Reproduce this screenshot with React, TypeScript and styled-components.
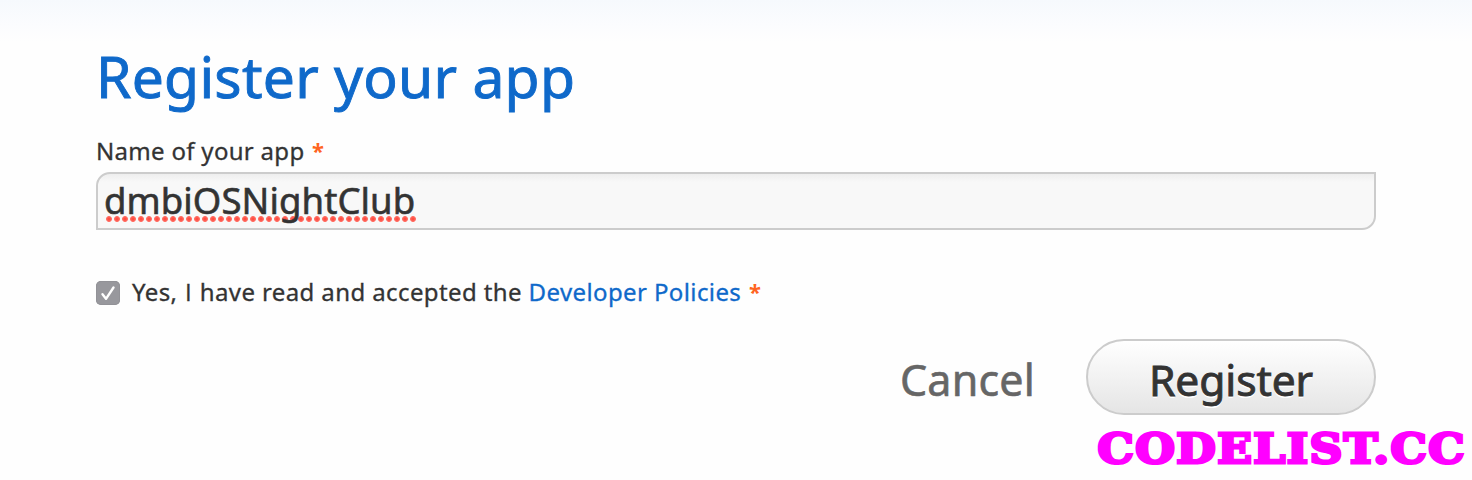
import React from "react";
import styled, { createGlobalStyle } from "styled-components";

const GlobalStyle = createGlobalStyle`
  *, *::before, *::after { box-sizing: border-box; }
  body {
    margin: 0;
    background: #fefefe;
    font-family: "Noto Sans", "Open Sans", sans-serif;
    color: #333;
  }
`;

const Page = styled.main`
  position: relative;
  height: 480px;
  padding: 41px 96px 0;
  overflow: hidden;
  background: linear-gradient(#f6f9fd 0, #fbfcfe 25px, #fefefe 42px);
`;

const Line = styled.span<{ $spacing: number; $stroke?: number }>`
  letter-spacing: ${(p) => p.$spacing}px;
  -webkit-text-stroke: ${(p) => p.$stroke ?? 0}px currentColor;
  white-space: pre;
`;

const Title = styled.h1`
  margin: 0 0 24px;
  font-size: 57px;
  font-weight: 400;
  line-height: 70px;
  color: #0f69ca;
`;

const Label = styled.label`
  display: block;
  margin-bottom: 5px;
  font-size: 24px;
  line-height: 32px;
`;

const Required = styled.span`
  margin-left: 1px;
  font-size: 22px;
  line-height: 1;
  vertical-align: 1px;
  color: #ff6420;
  font-weight: 700;
  -webkit-text-stroke: 0;
`;

const Field = styled.div`
  display: flex;
  align-items: flex-start;
  height: 58px;
  padding: 0 6px;
  border: 2px solid #ccc;
  border-radius: 14px 0 14px 0;
  background: linear-gradient(#eeeeee, #f8f8f8 8px);
`;

const Misspelled = styled.span`
  height: 48px;
  padding-right: 1px;
  font-size: 36.5px;
  line-height: 52px;
  background: radial-gradient(circle at 3px 3px, #ff4d42 1px, #ff766c 2.6px, transparent 3.3px) 2px 42px / 8px 6px repeat-x;
`;

const CheckRow = styled.div`
  display: flex;
  align-items: center;
  height: 34px;
  margin-top: 45px;
  font-size: 24px;
  line-height: 34px;
`;

const CheckBox = styled.span`
  display: flex;
  width: 24px;
  height: 24px;
  margin: 2px 12px 0 0;
  border-radius: 5px;
  background: #98989d;
  box-shadow: inset 0 0 0 1px #929297;
`;

const PlainI = styled.span`
  margin: 0 1px;
  font-family: "Open Sans", sans-serif;
`;

const Link = styled.a`
  color: #0f69ca;
`;

const Actions = styled.div`
  display: flex;
  justify-content: flex-end;
  align-items: center;
  gap: 51px;
  height: 76px;
  margin-top: 30px;
`;

const Cancel = styled.a`
  padding-top: 5px;
  font-size: 43px;
  line-height: 76px;
  color: #666;
`;

const RegisterButton = styled.button`
  width: 290px;
  height: 76px;
  padding: 4px 0 0;
  border: 2px solid #ccc;
  border-radius: 38px;
  background: linear-gradient(#fff, #e5e5e5);
  font: 400 42.5px/67px "Noto Sans", sans-serif;
  color: #333;
  text-shadow: 0 2px 0 #fff;
`;

const Watermark = styled.div`
  position: absolute;
  right: 6px;
  bottom: 1px;
  font: 700 41px/60px "DejaVu Serif", serif;
  color: #f0f;
  transform: scaleX(1.11);
  transform-origin: right center;
`;

export default function App() {
  return (
    <>
      <GlobalStyle />
      <Page>
        <Title><Line $spacing={0.25} $stroke={0.9}>Register your app</Line></Title>
        <Label>
          <Line $spacing={0.3} $stroke={0.3}>Name of your app <Required>*</Required></Line>
        </Label>
        <Field>
          <Misspelled><Line $spacing={0.1} $stroke={0.6}>dmbiOSNightClub</Line></Misspelled>
        </Field>
        <CheckRow>
          <CheckBox>
            <svg width="24" height="24" viewBox="0 0 24 24" fill="none" stroke="#fff" strokeWidth="2.4" strokeLinecap="round" strokeLinejoin="round">
              <path d="M6.5 13.2 10 17.8 17.5 6.5" />
            </svg>
          </CheckBox>
          <Line $spacing={0.39} $stroke={0.3}>Yes, <PlainI>I</PlainI> have read and accepted the <Link>Developer Policies</Link> <Required>*</Required></Line>
        </CheckRow>
        <Actions>
          <Cancel><Line $spacing={0.2} $stroke={0.6}>Cancel</Line></Cancel>
          <RegisterButton><Line $spacing={-0.1} $stroke={0.9}>Register</Line></RegisterButton>
        </Actions>
        <Watermark><Line $spacing={1.3} $stroke={3}>CODELIST.CC</Line></Watermark>
      </Page>
    </>
  );
}
